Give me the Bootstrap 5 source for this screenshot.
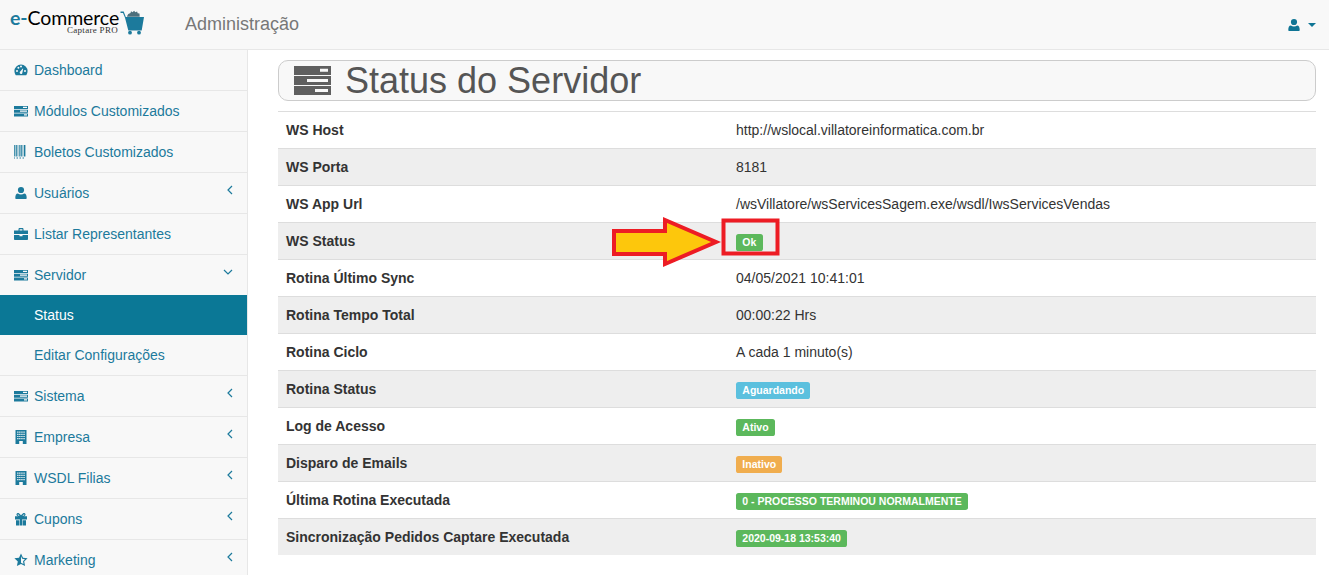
<!DOCTYPE html>
<html lang="pt-BR">
<head>
<meta charset="utf-8">
<title>Status do Servidor</title>
<link href="https://cdn.jsdelivr.net/npm/bootstrap@5.3.0/dist/css/bootstrap.min.css" rel="stylesheet">
<style>
html,body{height:575px;overflow:hidden}
body{font-family:"Liberation Sans",Arial,sans-serif;font-size:14px;color:#333;background:#fff}
.topbar{height:50px;background:#f8f8f8;border-bottom:1px solid #e7e7e7;padding:0}
.brandbox{width:185px;height:49px;padding-left:10px;position:relative}
.logotext{font-family:Lato,sans-serif;font-size:19.5px;line-height:16px;color:#000;padding-top:10px;height:26px;letter-spacing:-.1px;white-space:nowrap}
.logotext b{font-weight:700;color:#1c7a9c}
.logosub{font-family:"Liberation Serif",serif;font-size:9px;line-height:8px;color:#333;text-align:right;letter-spacing:.3px;width:108px}
.carticon{position:absolute;left:120px;top:10px}
.apptitle{font-size:18px;color:#777;line-height:49px}
.usermenu{color:#0f7595;padding-right:13px;gap:7px}
.caretdown{width:0;height:0;border-left:4px solid transparent;border-right:4px solid transparent;border-top:4px solid #0f7595}
.shell{height:525px;overflow:hidden}
.sidebar{width:248px;flex:none;background:#f8f8f8;border-right:1px solid #e7e7e7}
.sideitem{height:41px;border-bottom:1px solid #e7e7e7;padding-left:14px;padding-right:14px;color:#1c7a9c;text-decoration:none;line-height:40px;background:#f8f8f8}
.sideitem:hover{color:#1c7a9c}
.sideicon{width:14px;height:14px;margin-right:6px;flex:none;fill:#1c7a9c}
.topuser{width:14px;height:14px;fill:#0f7595;flex:none}
.chev{width:10px;height:10px;margin-top:-7px;margin-right:-2px;fill:none;stroke:#1c7a9c;stroke-width:1.2}
.chevdown{margin-right:0}
.subitem{height:40px;padding-left:34px;line-height:40px;color:#1c7a9c;text-decoration:none;background:#f8f8f8}
.subitem.current{background:#0b7896;color:#fff}
.subitem.last{height:41px;border-bottom:1px solid #e7e7e7}
.mainarea{flex:1;padding:10px 13px 0 30px;min-width:0}
.titlebox{height:41px;background:#f8f8f8;border:1px solid #ccc;border-radius:10px;color:#555;font-size:36px;line-height:41px;padding-left:15px;gap:14px;margin-bottom:10px}
.titleicon{width:37px;height:29px;fill:#5f5f5f;flex:none}
.statwrap{position:relative}
.stattable{margin:0;border-top:1px solid #ddd;--bs-table-color:#333;table-layout:fixed}
.stattable td{padding:8px;line-height:20px;border-bottom:1px solid #ddd;height:37px;font-size:14px}
.stattable td:first-child{width:450px;font-weight:700}
.stattable tr:nth-child(even) td{background:#eee;--bs-table-bg:#eee}
.stattable tr:last-child td{border-bottom:0;height:36px}
.tag{display:inline-block;font-size:10.5px;font-weight:700;color:#fff;line-height:11px;padding:3px 6.3px;border-radius:2.6px;vertical-align:middle}
.tagok{background:#5cb85c}.taginfo{background:#5bc0de}.tagwarn{background:#f0ad4e}
.pointer{position:absolute;left:332px;top:105px;overflow:visible}
</style>
</head>
<body>
<svg width="0" height="0" class="d-none">
<symbol id="i-gauge" viewBox="0 0 14 14"><path fill-rule="evenodd" d="M7 1.500A6.600 6.600 0 0 0 .4 8.100c0 1.400.4 2.700 1.200 3.800l.3.3h10.200l.3-.3c.8-1.100 1.200-2.400 1.200-3.800A6.600 6.600 0 0 0 7 1.500zM3 9a1 1 0 1 1 0-2 1 1 0 0 1 0 2zm1.400-3.300a1 1 0 1 1 0-2 1 1 0 0 1 0 2zM7 4.600a1 1 0 1 1 0-2 1 1 0 0 1 0 2zm1.200 5.900a1.400 1.400 0 0 1-2.400-1.400l3-3.600.4.2zM11 9a1 1 0 1 1 0-2 1 1 0 0 1 0 2z"/></symbol>
<symbol id="i-tasks" viewBox="0 0 14 14"><path fill-rule="evenodd" d="M0 2h14v3H0zM9 2.800v1.200h4V2.800zM0 5.700h14v3H0zM6 6.500v1.200h7V6.500zM0 9.400h14v3H0zM10 10.200v1.200h3v-1.200z"/></symbol>
<symbol id="i-barcode" viewBox="0 0 14 14"><path d="M-1.800 0h1v11.400h-1zM0 0h.8v11.400H0zM1.600 0h1.200v11.400H1.600zM3.600 0h.7v11.400h-.7zM5 0h.7v11.400H5zM6.500 0h1.300v11.400H6.500zM8.600 0h.7v11.400h-.7zM10 0h1.400v11.400H10zM-1 12.600h2v1h-2zM2.500 12.600H4v1H2.500zM5.500 12.600H7v1H5.500zM8.500 12.600H10v1H8.500z"/></symbol>
<symbol id="i-user" viewBox="0 0 14 14"><circle cx="7" cy="4" r="3.100"/><path d="M2.300 13c-.6 0-1-.4-1-1 0-2.500.7-4.600 2.600-4.600.8.700 1.900 1.100 3.100 1.100s2.300-.4 3.100-1.100c1.900 0 2.600 2.100 2.600 4.600 0 .6-.4 1-1 1z"/></symbol>
<symbol id="i-case" viewBox="0 0 14 14"><path fill-rule="evenodd" d="M4.500 2.200C4.500 1.500 5 1 5.600 1h2.800c.6 0 1.100.5 1.100 1.200V3.500H14V7H0V3.500h4.500zM5.600 2.200v1.300h2.800V2.200zM0 8h5.500v1.200h3V8H14v4.200c0 .5-.4.8-.8.8H.8c-.4 0-.8-.3-.8-.8z"/></symbol>
<symbol id="i-build" viewBox="0 0 14 14"><path fill-rule="evenodd" d="M1.500 0h11v14h-11zM3.200 1.500v1.200h1.300V1.500zm2 0v1.200h1.300V1.500zm2.100 0v1.200h1.300V1.500zm2.100 0v1.200h1.300V1.500zM3.200 3.700v1.200h1.300V3.700zm2 0v1.200h1.300V3.700zm2.100 0v1.200h1.300V3.700zm2.100 0v1.200h1.300V3.700zM3.200 5.900v1.200h1.300V5.900zm2 0v1.200h1.300V5.900zm2.100 0v1.200h1.300V5.900zm2.100 0v1.200h1.300V5.900zM3.200 8.100v1.200h1.300V8.100zm2 0v1.200h1.300V8.100zm2.100 0v1.200h1.300V8.100zm2.100 0v1.200h1.300V8.100zM5.200 11v3h3.600v-3z"/></symbol>
<symbol id="i-gift" viewBox="0 0 14 14"><path fill-rule="evenodd" d="M1 4.300h3.200C3 4 2.300 3.200 2.500 2.200 2.800 1 4.200.8 5.200 1.600L7 3.300l1.800-1.700c1-.8 2.400-.6 2.700.6.200 1-.5 1.800-1.700 2.100H13v3.300H8v5.900H6V7.600H1zM3.600 2.800c.1.600.8.900 2 1.200L4.500 2.600c-.4-.4-.9-.2-.9.2zm6.800 0c0-.4-.5-.6-.9-.2L8.400 4c1.200-.3 1.900-.6 2-1.200zM2 8.200h3.500v5.300H2zM8.500 8.200H12v5.300H8.500z"/></symbol>
<symbol id="i-star" viewBox="0 0 14 14"><path fill-rule="evenodd" d="M7 .5l2 4.200 4.600.6-3.400 3.200.9 4.600L7 10.900 2.900 13.100l.9-4.600L.4 5.300 5 4.700zm0 2.700v6.500l2.500 1.300-.5-2.800 2-2-2.800-.4z"/></symbol>
</svg>

<nav class="navbar topbar d-flex flex-nowrap align-items-center justify-content-between">
  <div class="d-flex align-items-center">
    <div class="brandbox">
      <div class="logotext"><b>e-</b>Commerce</div>
      <div class="logosub">Captare PRO</div>
      <svg class="carticon" width="25" height="25" viewBox="0 0 25 25"><path d="M.5 1.500h3.200L5.800 7H24l-2.300 13.500H8.300L5 7.800 3 3H.5z" fill="#1c7a9c"/><path d="M7 6.800c.4-2.600 2-3.400 3.500-3.800l.5-1.800 1.500 1 1.600-1.500 1.200 1.600 1.800-.8.600 1.800 1.800.2.200 3.300z" fill="#4d6f7c"/><circle cx="10" cy="22.700" r="1.900" fill="#1c7a9c"/><circle cx="19" cy="22.700" r="1.900" fill="#1c7a9c"/></svg>
    </div>
    <span class="apptitle">Administração</span>
  </div>
  <div class="usermenu d-flex align-items-center">
    <svg class="topuser"><use href="#i-user"/></svg>
    <span class="caretdown"></span>
  </div>
</nav>

<div class="shell d-flex">
  <aside class="sidebar d-flex flex-column">
    <a class="sideitem d-flex align-items-center" href="#"><svg class="sideicon"><use href="#i-gauge"/></svg>Dashboard</a>
    <a class="sideitem d-flex align-items-center" href="#"><svg class="sideicon"><use href="#i-tasks"/></svg>Módulos Customizados</a>
    <a class="sideitem d-flex align-items-center" href="#"><svg class="sideicon"><use href="#i-barcode"/></svg>Boletos Customizados</a>
    <a class="sideitem d-flex align-items-center justify-content-between" href="#"><span class="d-flex align-items-center"><svg class="sideicon"><use href="#i-user"/></svg>Usuários</span><svg class="chev" viewBox="0 0 10 10"><path d="M7 1L3 5l4 4"/></svg></a>
    <a class="sideitem d-flex align-items-center" href="#"><svg class="sideicon"><use href="#i-case"/></svg>Listar Representantes</a>
    <a class="sideitem d-flex align-items-center justify-content-between border-0" href="#"><span class="d-flex align-items-center"><svg class="sideicon"><use href="#i-tasks"/></svg>Servidor</span><svg class="chev chevdown" viewBox="0 0 10 10"><path d="M1 3l4 4 4-4"/></svg></a>
    <a class="subitem current" href="#">Status</a>
    <a class="subitem last" href="#">Editar Configurações</a>
    <a class="sideitem d-flex align-items-center justify-content-between" href="#"><span class="d-flex align-items-center"><svg class="sideicon"><use href="#i-tasks"/></svg>Sistema</span><svg class="chev" viewBox="0 0 10 10"><path d="M7 1L3 5l4 4"/></svg></a>
    <a class="sideitem d-flex align-items-center justify-content-between" href="#"><span class="d-flex align-items-center"><svg class="sideicon"><use href="#i-build"/></svg>Empresa</span><svg class="chev" viewBox="0 0 10 10"><path d="M7 1L3 5l4 4"/></svg></a>
    <a class="sideitem d-flex align-items-center justify-content-between" href="#"><span class="d-flex align-items-center"><svg class="sideicon"><use href="#i-build"/></svg>WSDL Filias</span><svg class="chev" viewBox="0 0 10 10"><path d="M7 1L3 5l4 4"/></svg></a>
    <a class="sideitem d-flex align-items-center justify-content-between" href="#"><span class="d-flex align-items-center"><svg class="sideicon"><use href="#i-gift"/></svg>Cupons</span><svg class="chev" viewBox="0 0 10 10"><path d="M7 1L3 5l4 4"/></svg></a>
    <a class="sideitem d-flex align-items-center justify-content-between" href="#"><span class="d-flex align-items-center"><svg class="sideicon"><use href="#i-star"/></svg>Marketing</span><svg class="chev" viewBox="0 0 10 10"><path d="M7 1L3 5l4 4"/></svg></a>
  </aside>
  <main class="mainarea">
    <div class="titlebox d-flex align-items-center">
      <svg class="titleicon" viewBox="0 0 37 29"><path fill-rule="evenodd" d="M0 0h37v9H0zM26 2.800v3h8v-3zM0 10h37v9H0zM13 13v3h21v-3zM0 20h37v9H0zM21 23v3h13v-3z"/></svg>
      <span>Status do Servidor</span>
    </div>
    <div class="statwrap">
      <table class="table stattable">
        <tbody>
          <tr><td>WS Host</td><td>http://wslocal.villatoreinformatica.com.br</td></tr>
          <tr><td>WS Porta</td><td>8181</td></tr>
          <tr><td>WS App Url</td><td>/wsVillatore/wsServicesSagem.exe/wsdl/IwsServicesVendas</td></tr>
          <tr><td>WS Status</td><td><span class="tag tagok">Ok</span></td></tr>
          <tr><td>Rotina Último Sync</td><td>04/05/2021 10:41:01</td></tr>
          <tr><td>Rotina Tempo Total</td><td>00:00:22 Hrs</td></tr>
          <tr><td>Rotina Ciclo</td><td>A cada 1 minuto(s)</td></tr>
          <tr><td>Rotina Status</td><td><span class="tag taginfo">Aguardando</span></td></tr>
          <tr><td>Log de Acesso</td><td><span class="tag tagok">Ativo</span></td></tr>
          <tr><td>Disparo de Emails</td><td><span class="tag tagwarn">Inativo</span></td></tr>
          <tr><td>Última Rotina Executada</td><td><span class="tag tagok">0 - PROCESSO TERMINOU NORMALMENTE</span></td></tr>
          <tr><td>Sincronização Pedidos Captare Executada</td><td><span class="tag tagok">2020-09-18 13:53:40</span></td></tr>
        </tbody>
      </table>
      <svg class="pointer" width="170" height="52" viewBox="0 0 170 52">
        <path d="M4 15H55V4L106 26 55 48V38H4z" fill="#fdc70c" stroke="#ed1c24" stroke-width="4"/>
        <rect x="113.500" y="4.500" width="54" height="33" fill="none" stroke="#ed1c24" stroke-width="4"/>
      </svg>
    </div>
  </main>
</div>
<script src="https://cdn.jsdelivr.net/npm/bootstrap@5.3.0/dist/js/bootstrap.bundle.min.js"></script>
</body>
</html>
